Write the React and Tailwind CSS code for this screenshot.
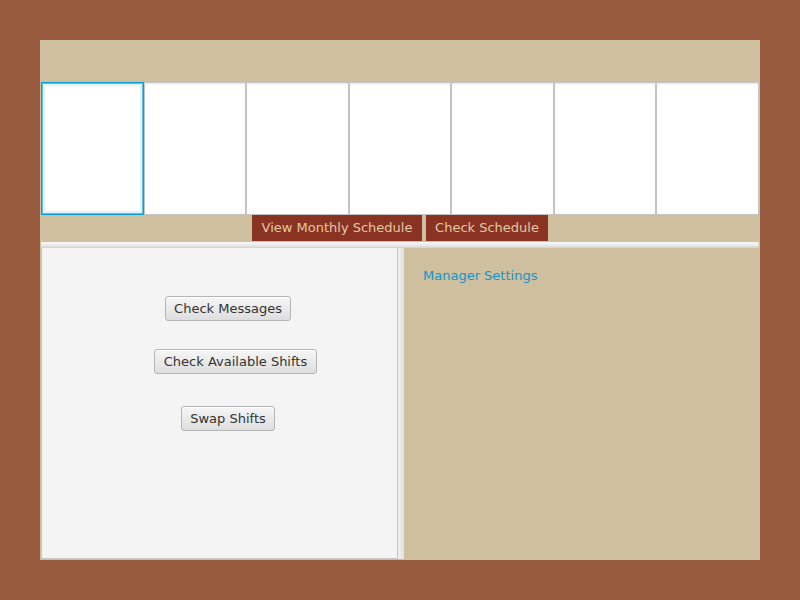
import React from "react";

const days = [0, 1, 2, 3, 4, 5, 6];

const fxButton =
  "h-[25px] rounded-[3px] border border-[#b5b5b5] bg-gradient-to-b from-[#f6f6f6] to-[#dedede] text-[13px] text-[#333] flex items-center justify-center shadow-[inset_0_1px_0_#fff]";

export default function App() {
  return (
    <div
      className="w-[800px] h-[600px] bg-[#975a3c] p-10"
      style={{ fontFamily: '"DejaVu Sans", sans-serif' }}
    >
      <div className="w-[720px] h-[520px] bg-[#cebf9f] flex flex-col">
        {/* Top spacer */}
        <div className="h-[42px]" />

        {/* Day cells */}
        <div className="flex h-[133px] px-[1px]">
          {days.map((d) => (
            <div
              key={d}
              className={
                d === 0
                  ? "flex-1 bg-white border border-[#0a9ed8] shadow-[inset_0_0_0_1px_#5cbfe6,inset_0_0_0_3px_#e3f3fa]"
                  : "flex-1 bg-white border border-[#c4c4c4] shadow-[inset_0_3px_3px_-2px_#e6e6e6]"
              }
            />
          ))}
        </div>

        {/* Schedule buttons */}
        <div className="flex justify-center gap-[4px] h-[26px]">
          <button className="w-[170px] h-[26px] bg-[#8b3323] text-[#e2c9a4] text-[13px]">
            View Monthly Schedule
          </button>
          <button className="w-[122px] h-[26px] bg-[#8b3323] text-[#e2c9a4] text-[13px]">
            Check Schedule
          </button>
        </div>

        {/* Horizontal divider */}
        <div className="h-[6px] mx-[1px] mt-[1px] rounded-r-[2px] bg-gradient-to-b from-[#f7f7f7] via-[#ececec] to-[#d2d2d2]" />

        {/* Split pane */}
        <div className="flex-1 flex ml-[1px] mr-[1px] mb-[1px]">
          <div className="w-[356px] bg-[#f4f4f4] border-l border-b border-[#c8c8c8] flex flex-col pt-[48px]">
            <button className={`${fxButton} w-[126px] ml-[123px]`}>Check Messages</button>
            <button className={`${fxButton} w-[163px] ml-[112px] mt-[28px]`}>
              Check Available Shifts
            </button>
            <button className={`${fxButton} w-[94px] ml-[139px] mt-[32px]`}>Swap Shifts</button>
          </div>
          <div className="w-[7px] border-l border-[#c6c6c6] bg-gradient-to-r from-[#f0f0f0] to-[#e2e2e2]" />
          <div className="flex-1 pl-[19px] pt-[15px]">
            <span className="text-[13px] text-[#1a93c8]">Manager Settings</span>
          </div>
        </div>
      </div>
    </div>
  );
}
